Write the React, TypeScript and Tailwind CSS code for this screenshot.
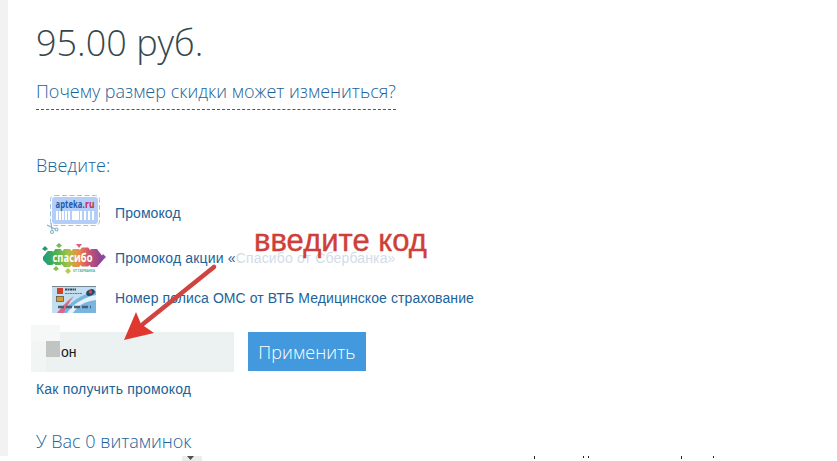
import { ReactNode } from 'react'

// [x, width] of each light bar
const barcode = [
  [0, 2], [3, 2], [6, 2], [9, 2], [12, 2], [16, 7], [24, 2], [28, 2], [32, 2], [36, 2],
]

const blobs = [
  [8, 16, 7], [16, 15, 8], [25, 16, 9], [34, 16, 9], [43, 15, 9.5], [52, 16, 9],
]

function AptekaCoupon() {
  return (
    <svg width="56" height="42" viewBox="0 0 56 42" className="block overflow-visible">
      <rect x="4.5" y="3.5" width="49" height="30" rx="4" fill="#fff" stroke="#9fc3dc" strokeDasharray="5 2.5" />
      <rect x="6" y="5" width="46" height="27" rx="3" fill="#b3cff7" />
      <text y="15.5" fontSize="10" fontWeight="700" fontFamily="Open Sans, sans-serif">
        <tspan x="9.5" textLength="27" lengthAdjust="spacingAndGlyphs" fill="#235aa8">apteka</tspan>
        <tspan x="36.5" textLength="12" lengthAdjust="spacingAndGlyphs" fill="#c4284f">.ru</tspan>
      </text>
      {barcode.map(([x, w]) => (
        <rect key={x} x={10 + x} y="19" width={w} height="9" fill="#fff" />
      ))}
      <g stroke="#7fb3cb" strokeWidth="1.1" fill="none">
        <path d="M1 33l8 4M5 31l1 7" />
        <circle cx="10.5" cy="37.5" r="1.5" />
        <circle cx="6" cy="40" r="1.5" />
      </g>
    </svg>
  )
}

function SpasiboLogo() {
  return (
    <svg width="64" height="32" viewBox="0 0 64 32" className="block">
      <defs>
        <linearGradient id="rainbow" gradientUnits="userSpaceOnUse" x1="1" x2="62" y1="0" y2="0">
          <stop offset="0" stopColor="#189b80" />
          <stop offset="0.22" stopColor="#4eb252" />
          <stop offset="0.42" stopColor="#a7c244" />
          <stop offset="0.58" stopColor="#ee8b43" />
          <stop offset="0.74" stopColor="#cf5570" />
          <stop offset="1" stopColor="#7d3f98" />
        </linearGradient>
      </defs>
      <g fill="url(#rainbow)">
        {blobs.map(([cx, cy, r]) => (
          <polygon
            key={cx}
            points={`${cx - r},${cy - 1} ${cx - r / 3},${cy - r} ${cx + r / 3},${cy - r} ${cx + r},${cy - 1} ${cx + r},${cy + 2} ${cx + r / 3},${cy + r} ${cx - r / 3},${cy + r} ${cx - r},${cy + 2}`}
          />
        ))}
      </g>
      <path fill="#239a6c" d="M3 4l3 3-3 2-3-2z" />
      <path fill="#79b955" d="M17 1l3 2.500-3 2.500-3-2.500z" />
      <path fill="#d9627e" d="M34 2h6l-3 4z" />
      <path fill="#8c4a9e" d="M61 12l3 3-3 3-2-3z" />
      <path fill="#82bf4e" d="M14 24l3 3-3 2-3-2z" />
      <path fill="#b7cb4a" d="M26 26l3 3-3 3-3-3z" />
      <text x="10.500" y="19.500" textLength="40" lengthAdjust="spacingAndGlyphs" fontSize="12" fontWeight="700" fontFamily="Open Sans, sans-serif" fill="#fff">
        спасибо
      </text>
      <text x="31" y="30" textLength="22" lengthAdjust="spacingAndGlyphs" fontSize="4" fontWeight="700" fontFamily="Open Sans, sans-serif" fill="#58a878">
        ОТ СБЕРБАНКА
      </text>
    </svg>
  )
}

function PolicyCard() {
  return (
    <svg width="44" height="30" viewBox="0 -3 44 30" className="block">
      <rect width="44" height="27" fill="#c3deee" />
      <path d="M44 5C27 9 18 17 9 27h35z" fill="#78b6df" />
      <path d="M44 9C29 12 21 19 15 27h6C27 18 35 15 44 14z" fill="#e5f2fa" />
      <path d="M5 27c5-6 9-11 17-17-5 6-8 12-10 17z" fill="#dc6683" />
      <rect width="44" height="1" fill="#788795" />
      <rect x="5" y="2" width="6" height="6" fill="#ce3f2d" />
      <rect x="4.5" y="10.5" width="7" height="5" fill="#d0a137" stroke="#5b4630" strokeWidth="0.7" />
      <path d="M13 3.500h11" stroke="#384b60" strokeWidth="2" strokeDasharray="2 0.5" />
      <path d="M13 7.500h17" stroke="#66788b" strokeWidth="1.2" strokeDasharray="2 0.5" />
      <ellipse cx="38.5" cy="6.5" rx="4.5" ry="3" transform="rotate(-25 38.5 6.5)" fill="#26436d" />
      <circle cx="38.5" cy="6" r="1.8" fill="#dc4648" />
      <path d="M6 21h33" stroke="#4b6075" strokeWidth="2.5" strokeDasharray="6 2" />
    </svg>
  )
}

function PromoRow({ icon, iconClass, children }: { icon: ReactNode; iconClass: string; children: ReactNode }) {
  return (
    <li className="flex h-10 items-center">
      <span className={`w-[79px] shrink-0 ${iconClass}`}>{icon}</span>
      <a href="#" className="whitespace-nowrap">{children}</a>
    </li>
  )
}

export default function App() {
  return (
    <div className="relative flex h-[461px] w-[837px] overflow-hidden bg-white font-['Liberation_Sans',sans-serif]">
      <aside className="h-[456px] w-2 shrink-0 bg-[#f2f2f2]" />

      <main className="flex flex-1 flex-col items-start pl-7 pt-[23px] text-[#1b6398]">
        <h1 className="h-10 whitespace-nowrap font-['Open_Sans',sans-serif] text-[36px] font-light leading-10 text-[#35474d]">
          95.00 руб.
        </h1>
        <a
          href="#"
          className="mt-4 h-[31px] w-[360px] whitespace-nowrap border-b border-dashed border-[#2f6285] font-['Open_Sans',sans-serif] text-[18px] font-light leading-6"
        >
          Почему размер скидки может измениться?
        </a>

        <h2 className="mt-[43px] h-6 font-['Open_Sans',sans-serif] text-[18px] font-light leading-6">Введите:</h2>

        <ul className="mt-4 text-[14px] leading-5 tracking-[0.09px]">
          <PromoRow icon={<AptekaCoupon />} iconClass="pl-[10px]">Промокод</PromoRow>
          <li className="h-[5px]" aria-hidden="true" />
          <PromoRow icon={<SpasiboLogo />} iconClass="pl-[6px]">
            <span className="tracking-[0.16px]">
              Промокод акции «<span className="text-[#d2dce8]">Спасибо от Сбербанка»</span>
            </span>
          </PromoRow>
          <PromoRow icon={<PolicyCard />} iconClass="pl-4">
            Номер полиса ОМС от ВТБ Медицинское страхование
          </PromoRow>
        </ul>

        <form className="-ml-[5px] mt-[14px] flex h-10 items-start gap-[14px]">
          <label className="relative flex h-10 w-[203px] items-center bg-[#ebf2f1] pl-[15px] text-[14px] text-[#17191c]">
            <span className="absolute -top-[7px] left-0 h-4 w-[29px] bg-[#f6f8f8]" />
            <span className="absolute left-0 top-[9px] h-[31px] w-[15px] bg-[#f1f5f4]" />
            <span className="relative -top-[3px] h-4 w-[14px] bg-[#c0c5c4]" />
            <span className="ml-px">он</span>
          </label>
          <button
            type="button"
            className="flex h-[39px] w-[118px] items-center justify-center bg-[#4399dd] pt-0.5 font-['Open_Sans',sans-serif] text-[18px] font-light tracking-[0.1px] text-white"
          >
            Применить
          </button>
        </form>

        <a href="#" className="mt-[7px] whitespace-nowrap text-[14px] leading-5 tracking-[0.18px]">Как получить промокод</a>

        <p className="mt-[30px] whitespace-nowrap font-['Open_Sans',sans-serif] text-[18px] font-light leading-6">
          У Вас 0 витаминок
        </p>
      </main>

      {/* hand-placed hint over the form */}
      <div className="absolute left-[254px] top-[225px] whitespace-nowrap text-[31px] leading-8 text-[#cf3e38] [-webkit-text-stroke:0.4px_#cf3e38]">
        введите код
      </div>
      <svg className="absolute left-[120px] top-[260px]" width="100" height="84" viewBox="0 0 100 84">
        <path d="M94 7L23 64" stroke="#cf4440" strokeWidth="4.5" strokeLinecap="round" />
        <path d="M4 80L16 52L21 64L34 73Z" fill="#e0382e" />
      </svg>

      {/* page furniture cut by the lower edge */}
      <svg className="absolute left-0 top-[455px]" width="837" height="6" viewBox="0 0 837 6">
        <rect y="1" width="837" height="5" fill="#fff" />
        <rect x="182" y="1" width="20" height="5" fill="#ececec" />
        <path d="M187 1h7l-3.500 4z" fill="#505050" />
        <path d="M534.5 1v3M583.5 1v2M588.5 1v2M681.5 1v3M713.5 1v2" stroke="#222" />
      </svg>
    </div>
  )
}
